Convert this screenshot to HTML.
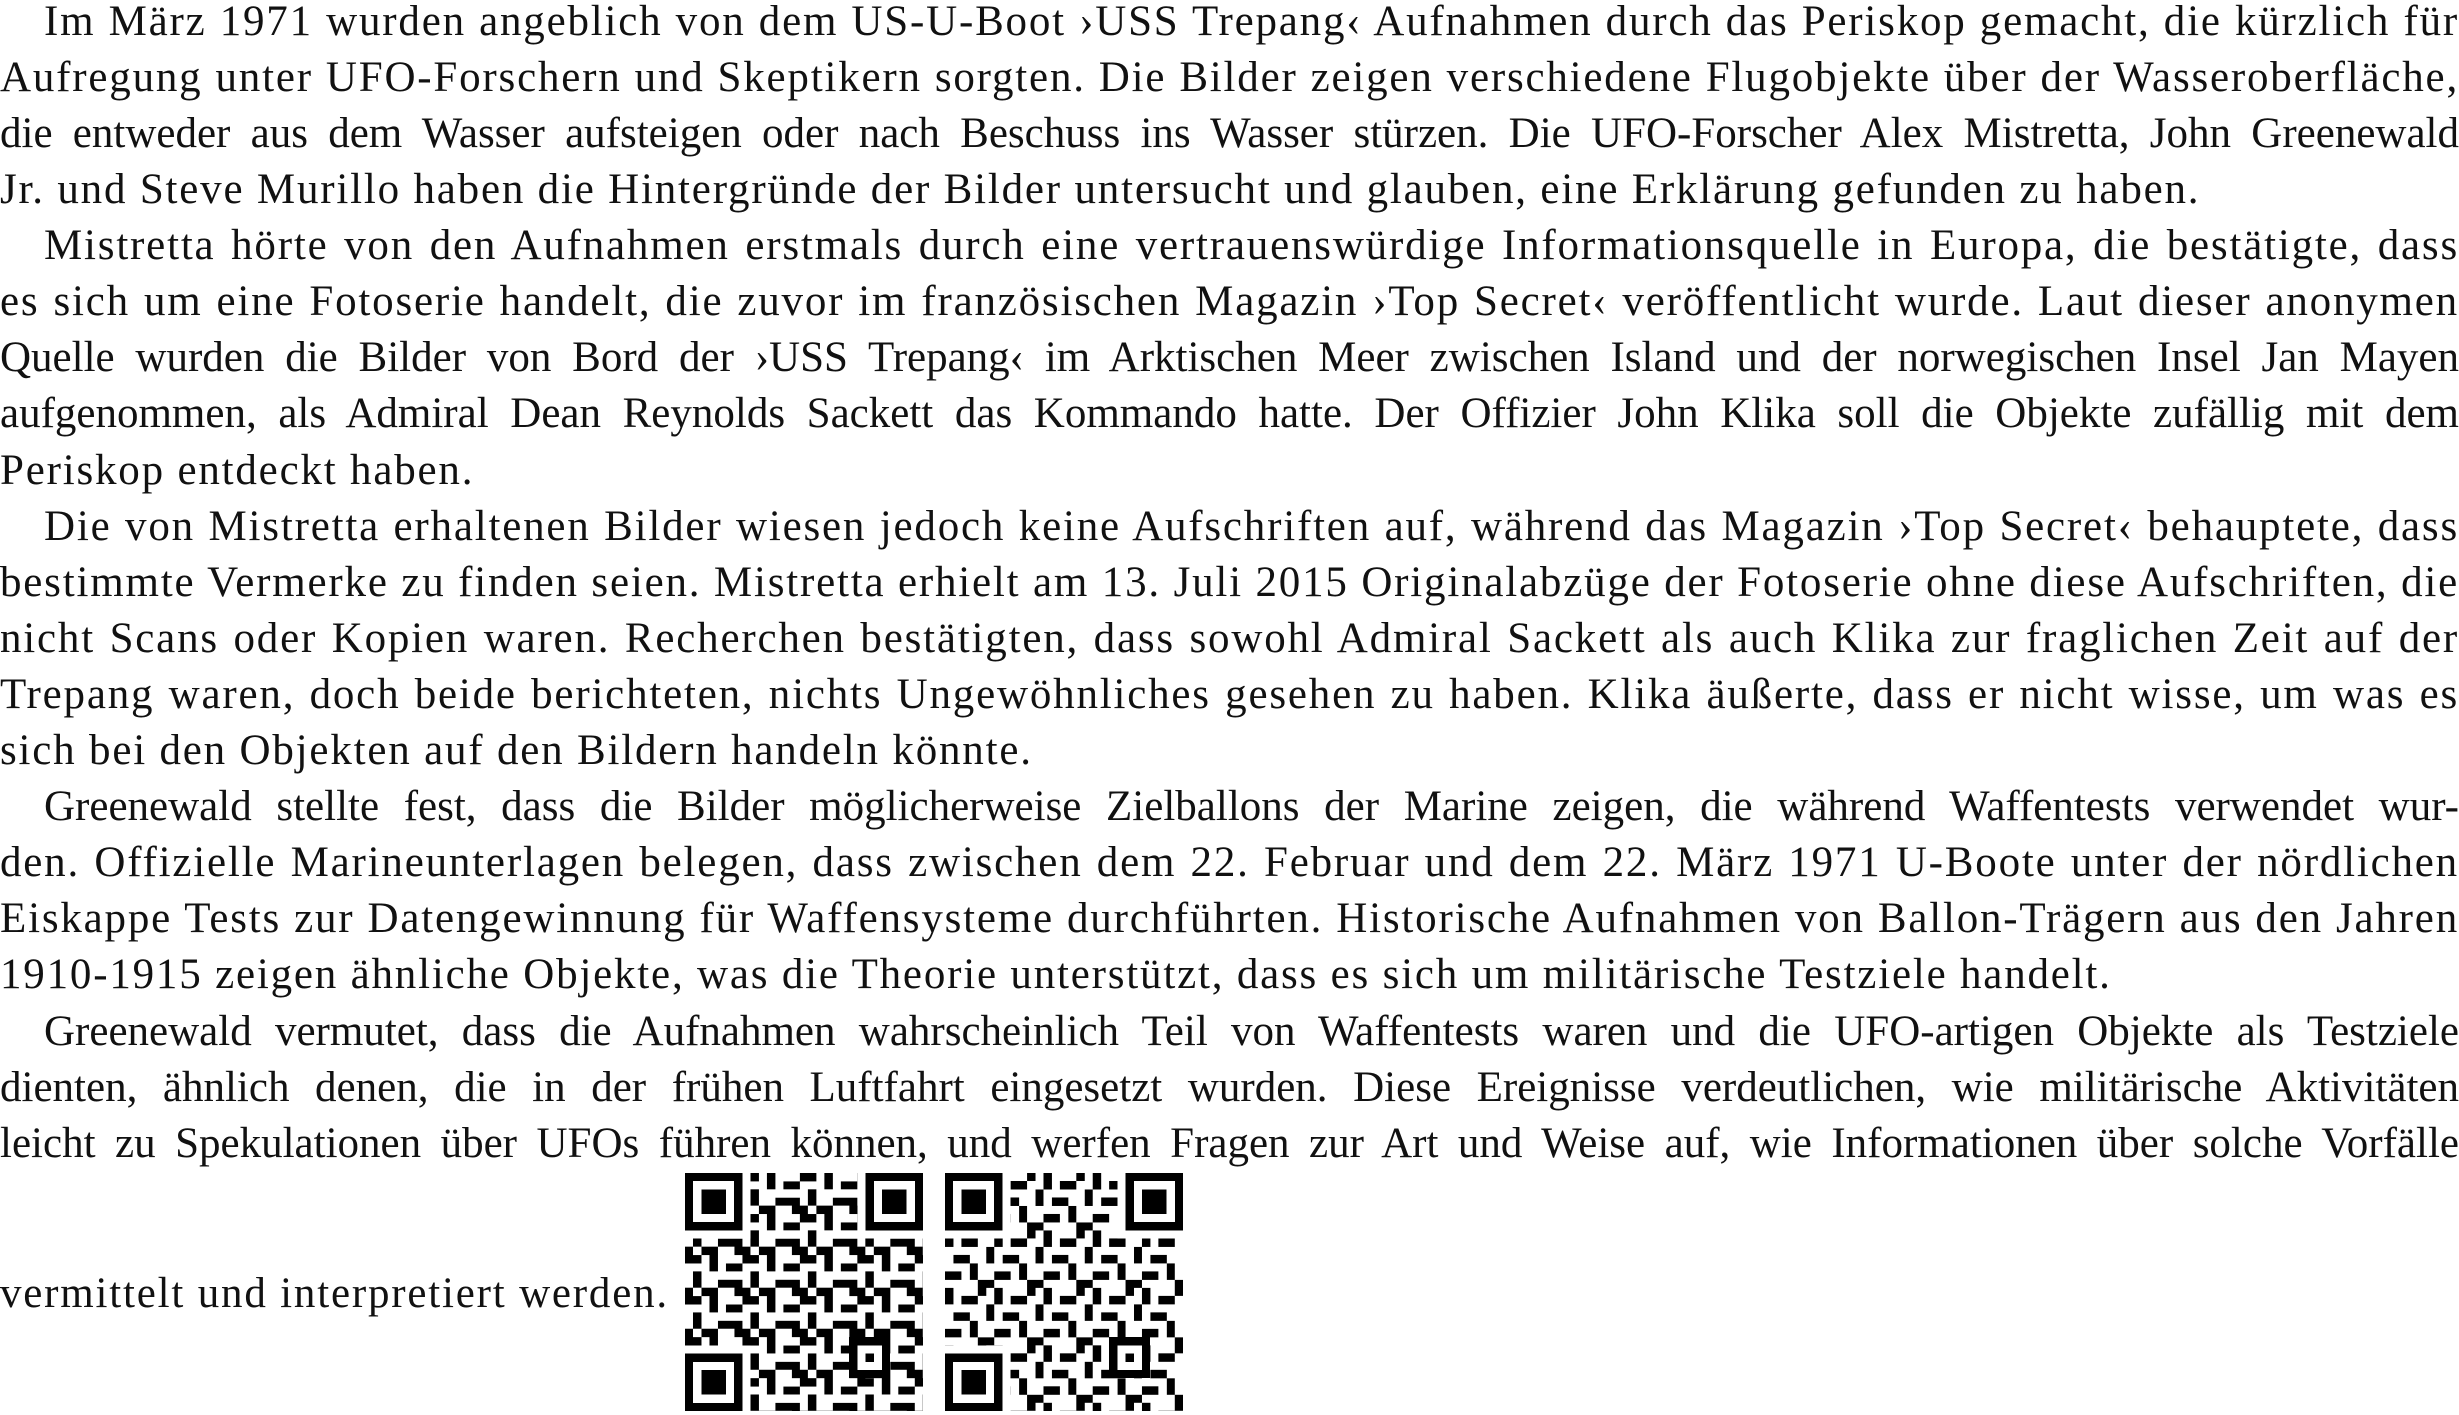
<!DOCTYPE html>
<html><head><meta charset="utf-8"><style>
html,body{margin:0;padding:0;background:#fff;width:2459px;height:1415px;overflow:hidden}
body{font-family:"Liberation Serif",serif;font-size:43px;letter-spacing:1.8px;color:#111;position:relative}
.l{position:absolute;left:0;width:2459px;line-height:56px;height:56px;text-align:justify;text-align-last:justify;white-space:normal;overflow:hidden}
.t{letter-spacing:0}
.n{text-align-last:left}
.i{text-indent:44px}
.qr{position:absolute;top:1173px;width:238px;height:238px}
</style></head><body>
<div class="l i" style="top:-6px">Im März 1971 wurden angeblich von dem US-U-Boot ›USS Trepang‹ Aufnahmen durch das Periskop gemacht, die kürzlich für</div>
<div class="l" style="top:50px">Aufregung unter UFO-Forschern und Skeptikern sorgten. Die Bilder zeigen verschiedene Flugobjekte über der Wasseroberfläche,</div>
<div class="l t" style="top:106px">die entweder aus dem Wasser aufsteigen oder nach Beschuss ins Wasser stürzen. Die UFO-Forscher Alex Mistretta, John Greenewald</div>
<div class="l n" style="top:162px">Jr. und Steve Murillo haben die Hintergründe der Bilder untersucht und glauben, eine Erklärung gefunden zu haben.</div>
<div class="l i" style="top:218px">Mistretta hörte von den Aufnahmen erstmals durch eine vertrauenswürdige Informationsquelle in Europa, die bestätigte, dass</div>
<div class="l" style="top:274px">es sich um eine Fotoserie handelt, die zuvor im französischen Magazin ›Top Secret‹ veröffentlicht wurde. Laut dieser anonymen</div>
<div class="l t" style="top:330px">Quelle wurden die Bilder von Bord der ›USS Trepang‹ im Arktischen Meer zwischen Island und der norwegischen Insel Jan Mayen</div>
<div class="l t" style="top:386px">aufgenommen, als Admiral Dean Reynolds Sackett das Kommando hatte. Der Offizier John Klika soll die Objekte zufällig mit dem</div>
<div class="l n" style="top:443px">Periskop entdeckt haben.</div>
<div class="l i" style="top:499px">Die von Mistretta erhaltenen Bilder wiesen jedoch keine Aufschriften auf, während das Magazin ›Top Secret‹ behauptete, dass</div>
<div class="l" style="top:555px">bestimmte Vermerke zu finden seien. Mistretta erhielt am 13. Juli 2015 Originalabzüge der Fotoserie ohne diese Aufschriften, die</div>
<div class="l" style="top:611px">nicht Scans oder Kopien waren. Recherchen bestätigten, dass sowohl Admiral Sackett als auch Klika zur fraglichen Zeit auf der</div>
<div class="l" style="top:667px">Trepang waren, doch beide berichteten, nichts Ungewöhnliches gesehen zu haben. Klika äußerte, dass er nicht wisse, um was es</div>
<div class="l n" style="top:723px">sich bei den Objekten auf den Bildern handeln könnte.</div>
<div class="l i t" style="top:779px">Greenewald stellte fest, dass die Bilder möglicherweise Zielballons der Marine zeigen, die während Waffentests verwendet wur-</div>
<div class="l" style="top:835px">den. Offizielle Marineunterlagen belegen, dass zwischen dem 22. Februar und dem 22. März 1971 U-Boote unter der nördlichen</div>
<div class="l" style="top:891px">Eiskappe Tests zur Datengewinnung für Waffensysteme durchführten. Historische Aufnahmen von Ballon-Trägern aus den Jahren</div>
<div class="l n" style="top:947px">1910-1915 zeigen ähnliche Objekte, was die Theorie unterstützt, dass es sich um militärische Testziele handelt.</div>
<div class="l i t" style="top:1004px">Greenewald vermutet, dass die Aufnahmen wahrscheinlich Teil von Waffentests waren und die UFO-artigen Objekte als Testziele</div>
<div class="l t" style="top:1060px">dienten, ähnlich denen, die in der frühen Luftfahrt eingesetzt wurden. Diese Ereignisse verdeutlichen, wie militärische Aktivitäten</div>
<div class="l t" style="top:1116px">leicht zu Spekulationen über UFOs führen können, und werfen Fragen zur Art und Weise auf, wie Informationen über solche Vorfälle</div>
<div class="l n" style="top:1266px;width:685px">vermittelt und interpretiert werden.</div>

<svg class="qr" style="left:685px" viewBox="0 0 29 29" shape-rendering="crispEdges">
<defs>
<pattern id="p" width="7" height="5" patternUnits="userSpaceOnUse">
<rect x="0" y="0" width="2" height="1"/><rect x="3" y="0" width="1" height="2"/><rect x="5" y="1" width="2" height="1"/><rect x="1" y="2" width="1" height="2"/><rect x="4" y="3" width="2" height="1"/><rect x="0" y="4" width="1" height="1"/><rect x="6" y="3" width="1" height="2"/><rect x="2" y="4" width="2" height="1"/>
</pattern>
<g id="f"><rect x="0" y="0" width="7" height="7"/><rect x="1" y="1" width="5" height="5" fill="#fff"/><rect x="2" y="2" width="3" height="3"/></g>
</defs>
<rect x="0" y="0" width="29" height="29" fill="url(#p)"/>
<rect x="0" y="0" width="8" height="8" fill="#fff"/><rect x="21" y="0" width="8" height="8" fill="#fff"/><rect x="0" y="21" width="8" height="8" fill="#fff"/>
<use href="#f"/><use href="#f" x="22"/><use href="#f" y="22"/>
<rect x="20" y="20" width="5" height="5"/><rect x="21" y="21" width="3" height="3" fill="#fff"/><rect x="22" y="22" width="1" height="1"/>
</svg>
<svg class="qr" style="left:945px" viewBox="0 0 29 29" shape-rendering="crispEdges">
<defs>
<pattern id="p2" width="6" height="7" patternUnits="userSpaceOnUse">
<rect x="0" y="0" width="1" height="2"/><rect x="2" y="1" width="2" height="1"/><rect x="4" y="0" width="1" height="1"/><rect x="5" y="2" width="1" height="2"/><rect x="1" y="3" width="2" height="1"/><rect x="3" y="4" width="1" height="2"/><rect x="0" y="5" width="2" height="1"/><rect x="4" y="6" width="2" height="1"/>
</pattern>
<g id="f2"><rect x="0" y="0" width="7" height="7"/><rect x="1" y="1" width="5" height="5" fill="#fff"/><rect x="2" y="2" width="3" height="3"/></g>
</defs>
<rect x="0" y="0" width="29" height="29" fill="url(#p2)"/>
<rect x="0" y="0" width="8" height="8" fill="#fff"/><rect x="21" y="0" width="8" height="8" fill="#fff"/><rect x="0" y="21" width="8" height="8" fill="#fff"/>
<use href="#f2"/><use href="#f2" x="22"/><use href="#f2" y="22"/>
<rect x="20" y="20" width="5" height="5"/><rect x="21" y="21" width="3" height="3" fill="#fff"/><rect x="22" y="22" width="1" height="1"/>
</svg>
</body></html>
